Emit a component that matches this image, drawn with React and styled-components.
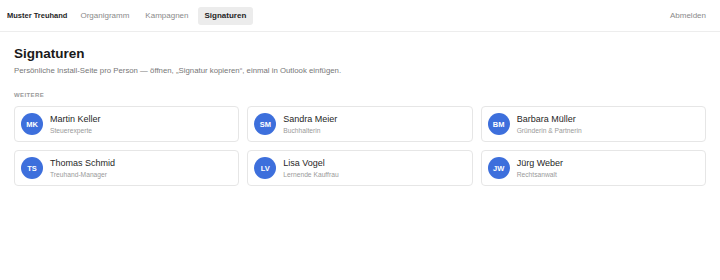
import styled, { createGlobalStyle } from "styled-components";

const GlobalStyle = createGlobalStyle`
  body {
    margin: 0;
    background: #fff;
    font-family: "Liberation Sans", Arial, sans-serif;
    color: #222;
  }
`;

const Header = styled.header`
  display: flex;
  align-items: center;
  height: 31px;
  padding: 0 7px;
  border-bottom: 1px solid #ededed;
`;

const Brand = styled.div`
  font-size: 7.5px;
  font-weight: bold;
  color: #1f1f1f;
  margin-right: 6px;
`;

const Nav = styled.nav`
  display: flex;
  gap: 2px;
`;

const NavItem = styled.a`
  display: flex;
  align-items: center;
  height: 18px;
  padding: 0 7px;
  border-radius: 3px;
  font-size: 8px;
  text-decoration: none;
  color: ${(p) => (p.$active ? "#1f1f1f" : "#8a8a8a")};
  font-weight: ${(p) => (p.$active ? "bold" : "normal")};
  background: ${(p) => (p.$active ? "#ececec" : "transparent")};
`;

const Logout = styled(NavItem)`
  margin-left: auto;
`;

const Main = styled.main`
  padding: 14px 14px 0;
`;

const Title = styled.h1`
  margin: 0;
  font-size: 13.5px;
  line-height: 16px;
  font-weight: bold;
  color: #1a1a1a;
`;

const Subtitle = styled.p`
  margin: 4px 0 0;
  font-size: 7.8px;
  line-height: 10px;
  color: #777;
`;

const Section = styled.div`
  margin-top: 15px;
  font-size: 6px;
  line-height: 8px;
  font-weight: bold;
  letter-spacing: 0.4px;
  text-transform: uppercase;
  color: #9a9a9a;
`;

const Grid = styled.div`
  display: grid;
  grid-template-columns: repeat(3, 1fr);
  gap: 8px;
  margin-top: 7px;
`;

const Card = styled.div`
  display: flex;
  align-items: center;
  gap: 7px;
  height: 36px;
  box-sizing: border-box;
  padding: 0 6px;
  border: 1px solid #e6e6e6;
  border-radius: 4px;
  background: #fff;
`;

const Avatar = styled.div`
  flex: none;
  width: 22px;
  height: 22px;
  border-radius: 50%;
  background: #3d6fdc;
  color: #fff;
  display: flex;
  align-items: center;
  justify-content: center;
  font-size: 7.5px;
  font-weight: bold;
`;

const Info = styled.div`
  display: flex;
  flex-direction: column;
  gap: 2px;
`;

const Name = styled.div`
  font-size: 9px;
  line-height: 11px;
  color: #1f1f1f;
`;

const Role = styled.div`
  font-size: 6.7px;
  line-height: 8px;
  color: #9a9a9a;
`;

const people = [
  { initials: "MK", name: "Martin Keller", role: "Steuerexperte" },
  { initials: "SM", name: "Sandra Meier", role: "Buchhalterin" },
  { initials: "BM", name: "Barbara Müller", role: "Gründerin & Partnerin" },
  { initials: "TS", name: "Thomas Schmid", role: "Treuhand-Manager" },
  { initials: "LV", name: "Lisa Vogel", role: "Lernende Kauffrau" },
  { initials: "JW", name: "Jürg Weber", role: "Rechtsanwalt" },
];

const App = () => {
  return (
    <>
      <GlobalStyle />
      <Header>
        <Brand>Muster Treuhand</Brand>
        <Nav>
          <NavItem>Organigramm</NavItem>
          <NavItem>Kampagnen</NavItem>
          <NavItem $active>Signaturen</NavItem>
        </Nav>
        <Logout>Abmelden</Logout>
      </Header>
      <Main>
        <Title>Signaturen</Title>
        <Subtitle>
          Persönliche Install-Seite pro Person — öffnen, „Signatur kopieren“,
          einmal in Outlook einfügen.
        </Subtitle>
        <Section>Weitere</Section>
        <Grid>
          {people.map((person) => (
            <Card key={person.initials}>
              <Avatar>{person.initials}</Avatar>
              <Info>
                <Name>{person.name}</Name>
                <Role>{person.role}</Role>
              </Info>
            </Card>
          ))}
        </Grid>
      </Main>
    </>
  );
};

export default App;
